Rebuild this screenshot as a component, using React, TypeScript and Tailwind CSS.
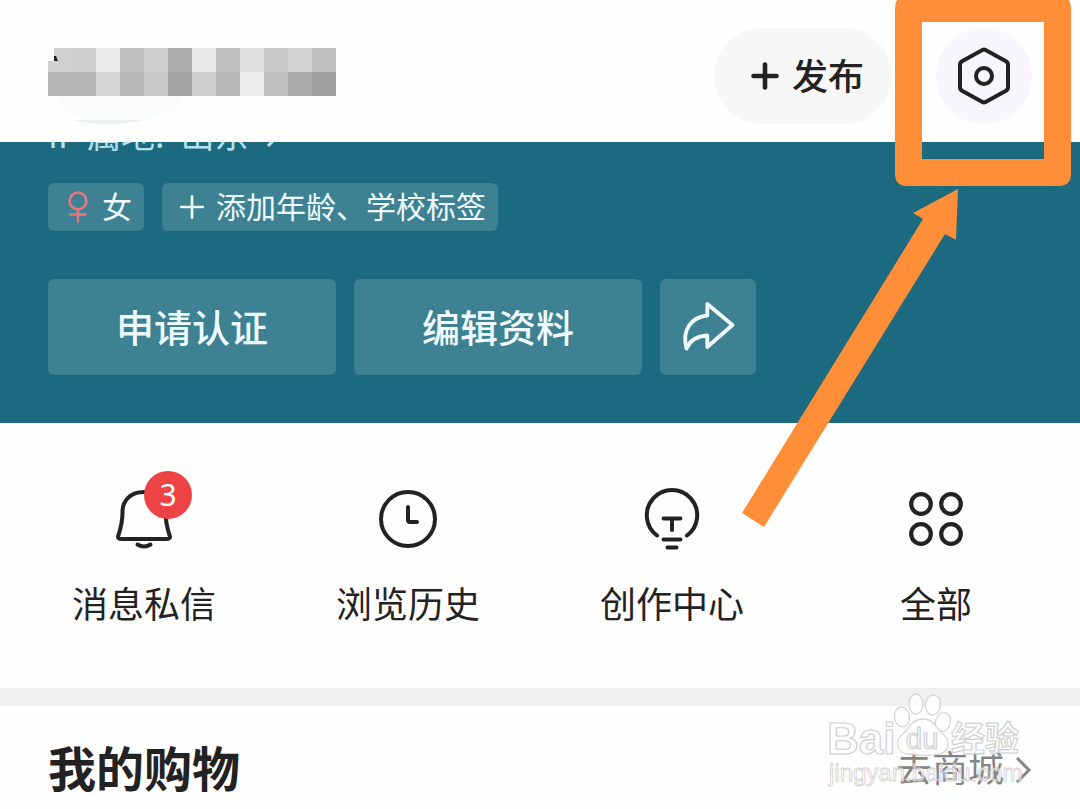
import React from 'react';

const TOP_CELLS = ['#d0d0d0', '#cfcfcf', '#ebebeb', '#c1c1c1', '#cecece', '#acacac', '#e9e9e9', '#c0c0c0', '#dedede', '#cacaca', '#d3d3d3', '#c1c1c1'];
const BOTTOM_CELLS = ['#b6b6b6', '#b7b7b7', '#d5d5d5', '#b8b8b8', '#cacaca', '#a3a3a3', '#cecece', '#bababa', '#ececec', '#c1c1c1', '#ababab', '#9f9f9f'];

// Censored nickname
function MaskedName() {
  return (
    <svg className="mt-5 h-[76px] w-72" viewBox="0 0 288 76" role="img" aria-label="昵称">
      <path d="M8 48H136Q124 74 60 76Q22 74 8 48Z" fill="#fafbfb" />
      <path d="M24 72H96Q60 80 24 72Z" fill="#e9f1f1" />
      {TOP_CELLS.map((fill, i) => (
        <rect key={i} x={i * 24} y="0" width="24" height="24" fill={fill} shapeRendering="crispEdges" />
      ))}
      {BOTTOM_CELLS.map((fill, i) => (
        <rect key={i} x={i * 24} y="24" width="24" height="24" fill={fill} shapeRendering="crispEdges" />
      ))}
      <path d="M0 0H6V13H0Z" fill="#fefefe" />
      <path d="M6 8H8L10 13H6Z" fill="#222" />
    </svg>
  );
}

function PlusIcon({ className, strokeWidth }: { className: string; strokeWidth: number }) {
  return (
    <svg className={className} viewBox="0 0 30 30" fill="none" stroke="currentColor" strokeWidth={strokeWidth} strokeLinecap="round" aria-hidden="true">
      <path d="M15 3.5V26.5M3.5 15H26.5" />
    </svg>
  );
}

function SettingsIcon() {
  return (
    <svg className="size-[60px]" viewBox="0 0 60 60" fill="none" stroke="currentColor" strokeWidth="4" strokeLinejoin="round" aria-hidden="true">
      <path d="M28 4.2Q30 3 32 4.2L52 15.2Q54 16.4 54 18.8V41.2Q54 43.6 52 44.8L32 55.8Q30 57 28 55.8L8 44.8Q6 43.6 6 41.2V18.8Q6 16.4 8 15.2Z" />
      <circle cx="30" cy="30" r="8" />
    </svg>
  );
}

function FemaleIcon() {
  return (
    <svg className="h-8 w-6" viewBox="0 0 24 32" fill="none" stroke="#e5787f" strokeWidth="2.6" strokeLinecap="round" aria-hidden="true">
      <circle cx="12" cy="10" r="8.4" />
      <path d="M12 19V30.5M4.5 23.500H19.5" />
    </svg>
  );
}

function ShareIcon() {
  return (
    <svg className="size-[60px]" viewBox="0 0 60 60" fill="none" stroke="currentColor" strokeWidth="3.8" strokeLinejoin="round" aria-hidden="true">
      <path d="M29.3 7L54.500 28L29.3 50V38.5C20 39 12 43 8.5 51.500C3.500 33.500 13 20 29.300 18.500Z" />
    </svg>
  );
}

function BellIcon() {
  return (
    <svg className="size-16" viewBox="0 0 64 64" fill="none" stroke="currentColor" strokeWidth="4" strokeLinecap="round" strokeLinejoin="round" aria-hidden="true">
      <path d="M32 5C18 5 10.500 14 10.500 25C10.500 36 8.500 42 6.500 48Q5 52 9 52H55Q59 52 57.500 48C55.500 42 53.500 36 53.500 25C53.500 14 46 5 32 5Z" />
      <path d="M25.500 57.500Q32 61.500 38.500 57.500" />
    </svg>
  );
}

function ClockIcon() {
  return (
    <svg className="size-16" viewBox="0 0 64 64" fill="none" stroke="currentColor" strokeWidth="4" strokeLinecap="round" strokeLinejoin="round" aria-hidden="true">
      <circle cx="32" cy="32" r="27" />
      <path d="M32 20V33Q32 35 34 35H41" />
    </svg>
  );
}

function BulbIcon() {
  return (
    <svg className="size-16" viewBox="0 0 64 64" fill="none" stroke="currentColor" strokeWidth="4" strokeLinecap="round" aria-hidden="true">
      <path d="M17 48.500A25.200 25.200 0 1 1 47 48.500" />
      <path d="M23.500 31.500H40.500M32 32V43M23.500 52.500H40.500M27.500 60.500H36.500" />
    </svg>
  );
}

function AllIcon() {
  return (
    <svg className="size-16" viewBox="0 0 64 64" fill="none" stroke="currentColor" strokeWidth="4.2" aria-hidden="true">
      <circle cx="17" cy="17" r="9.8" />
      <circle cx="47" cy="17" r="9.8" />
      <circle cx="17" cy="47" r="9.8" />
      <circle cx="47" cy="47" r="9.8" />
    </svg>
  );
}

function Watermark() {
  return (
    <svg className="pointer-events-none absolute -top-5 right-12 h-[108px] w-[210px]" viewBox="0 0 210 108" aria-hidden="true">
      <g fill="#fff" stroke="#d0d0d0" strokeWidth="1.3" opacity="0.85">
        <ellipse cx="80" cy="31" rx="7.500" ry="10" transform="rotate(-8 80 31)" />
        <ellipse cx="94" cy="18" rx="7" ry="10" />
        <ellipse cx="111" cy="19" rx="7.500" ry="10" transform="rotate(8 111 19)" />
        <ellipse cx="121" cy="36" rx="7.500" ry="9.500" transform="rotate(14 121 36)" />
        <path d="M101 33C89 33 87 43 81 48C70 56 77 68 86 68C94 69 110 70 117 68C126 67 130 55 121 48C114 43 113 33 101 33Z" />
      </g>
      <g fill="#fff" fillOpacity="0.8" stroke="#d0d0d0" strokeWidth="1.200" fontFamily="'Liberation Sans', 'Noto Sans CJK SC', sans-serif">
        <text x="5" y="68" fontSize="44" fontWeight="700">Bai</text>
        <text x="84" y="63" fontSize="29">du</text>
        <text x="129" y="65" fontSize="34" fontWeight="700">经验</text>
        <text x="7" y="95" fontSize="24" strokeWidth="0.800" fillOpacity="0.500">jingyan.baidu.com</text>
      </g>
    </svg>
  );
}

// Orange frame around the settings button plus the arrow that points to it
function Callout() {
  return (
    <svg className="pointer-events-none absolute top-0 right-0 h-[540px] w-[340px]" viewBox="0 0 340 540" fill="#ff8e39" aria-hidden="true">
      <path fillRule="evenodd" d="M167 -4H319Q331 -4 331 8V174Q331 186 319 186H167Q155 186 155 174V8Q155 -4 167 -4ZM182 22V159H304V22Z" />
      <path d="M218 189L216 240L205 234L24 527L2 513L183 219L173 213Z" />
    </svg>
  );
}

const shortcuts = [
  { label: '消息私信', icon: <BellIcon />, badge: 3 },
  { label: '浏览历史', icon: <ClockIcon /> },
  { label: '创作中心', icon: <BulbIcon /> },
  { label: '全部', icon: <AllIcon /> }
];

export default function App() {
  return (
    <div className="relative min-h-screen overflow-hidden bg-[#fefefe] font-['Noto_Sans_CJK_SC',sans-serif] text-[#222]">
      <header className="flex items-start px-12 pt-7 pb-[18px]">
        <MaskedName />
        <button type="button" className="ml-auto flex h-24 items-center gap-3 rounded-full bg-[#f7f7f7] pr-7 pl-9 text-4xl font-medium">
          <PlusIcon className="size-[30px]" strokeWidth={4.6} />
          <span className="pb-1">发布</span>
        </button>
        <button type="button" aria-label="设置" className="ml-11 flex size-24 items-center justify-center rounded-full bg-[#f8f6fa]">
          <SettingsIcon />
        </button>
      </header>

      <section className="bg-[#1b6a7f] px-12 pb-12 text-[#effcff]">
        {/* scrolled under the header, only the lower edge shows */}
        <div className="flex h-3 items-end overflow-hidden">
          <p className="flex items-end gap-4 text-[34px] leading-10 whitespace-pre text-[#b4e2ee]">
            <span>IP 属地:</span>
            <span>山东</span>
            <svg className="mb-1.5 h-6 w-4" viewBox="0 0 16 24" fill="none" stroke="currentColor" strokeWidth="3" aria-hidden="true">
              <path d="M3 2L13 12L3 22" />
            </svg>
          </p>
        </div>
        <div className="mt-[29px] flex gap-[18px] text-3xl">
          <span className="flex h-12 items-center gap-3 rounded-md bg-[#3e8192] pr-3 pl-[18px]">
            <FemaleIcon />
            <span className="pb-1">女</span>
          </span>
          <button type="button" className="flex h-12 items-center gap-2.5 rounded-md bg-[#3e8192] px-3 pl-4">
            <PlusIcon className="size-7" strokeWidth={2.8} />
            <span className="pb-1">添加年龄、学校标签</span>
          </button>
        </div>
        <div className="mt-12 flex gap-[18px] text-[38px] font-medium">
          <button type="button" className="h-24 w-72 rounded-md bg-[#3e8192] pb-1">申请认证</button>
          <button type="button" className="h-24 w-72 rounded-md bg-[#3e8192] pb-1">编辑资料</button>
          <button type="button" aria-label="分享" className="flex size-24 items-center justify-center rounded-md bg-[#3e8192]">
            <ShareIcon />
          </button>
        </div>
      </section>

      <nav className="grid grid-cols-4 px-3 pt-16 pb-[61px]">
        {shortcuts.map(({ label, icon, badge }) => (
          <a key={label} href="#" className="flex flex-col items-center gap-[26px] text-4xl leading-[50px]">
            <span className="relative">
              {icon}
              {badge && (
                <span className="absolute -top-4 -right-4 flex size-12 items-center justify-center rounded-full bg-[#ee4344] font-['Noto_Sans',sans-serif] text-3xl text-white">
                  {badge}
                </span>
              )}
            </span>
            {label}
          </a>
        ))}
      </nav>

      <section className="relative border-t-[18px] border-[#f0f0f0] px-12 py-7">
        <div className="flex items-center justify-between">
          <h2 className="text-5xl leading-[64px] font-bold">我的购物</h2>
          <a href="#" className="flex items-center gap-3 text-4xl leading-[64px] text-[#858585]">
            去商城
            <svg className="mt-2 h-7 w-4" viewBox="0 0 16 28" fill="none" stroke="currentColor" strokeWidth="3" aria-hidden="true">
              <path d="M1 2L13 14L1 26" />
            </svg>
          </a>
        </div>
        <Watermark />
      </section>

      <Callout />
    </div>
  );
}
